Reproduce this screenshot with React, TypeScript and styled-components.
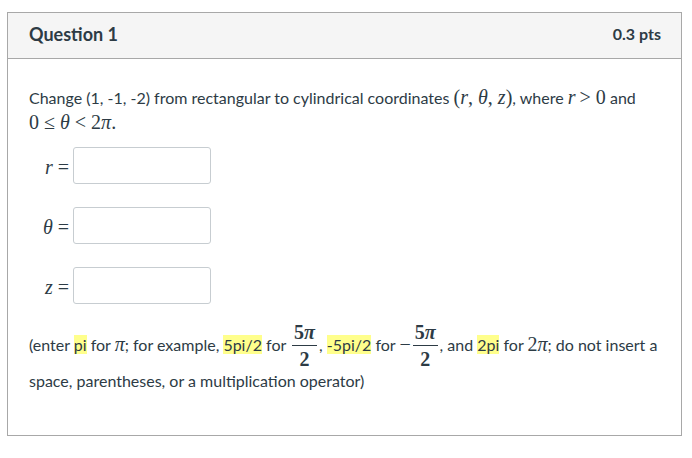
import styled, { createGlobalStyle } from "styled-components";

const GlobalStyle = createGlobalStyle`
  body {
    margin: 0;
    background: #ffffff;
    font-family: Lato, "Liberation Sans", sans-serif;
    color: #2d3b45;
  }
`;

const Page = styled.div`
  padding: 12px 10px 0 7px;
`;

const Card = styled.section`
  width: 675px;
  height: 424px;
  border: 1px solid #a8a8a8;
  box-sizing: border-box;
  display: flex;
  flex-direction: column;
`;

const Header = styled.header`
  height: 45px;
  background: #f5f5f5;
  border-bottom: 1px solid #a8a8a8;
  display: flex;
  align-items: center;
  justify-content: space-between;
  padding: 0 20px 0 21px;
`;

const Title = styled.h2`
  margin: 0 0 3px 0;
  font-size: 18px;
  line-height: 1;
  font-weight: 700;
  color: #2d3b45;
`;

const Points = styled.span`
  margin-bottom: 3px;
  font-size: 16px;
  line-height: 1;
  font-weight: 700;
  color: #2d3b45;
`;

const Body = styled.div`
  padding: 26px 21px 0 21px;
  font-size: 16px;
  line-height: 24px;
`;

const Prompt = styled.p`
  margin: 0;
`;

const M = styled.span<{ $upright?: boolean }>`
  font-family: "Liberation Serif", "DejaVu Serif", serif;
  font-style: ${({ $upright }) => ($upright ? "normal" : "italic")};
  font-size: 20px;
  color: #2d3b45;
`;

const Fields = styled.div`
  display: flex;
  flex-direction: column;
  gap: 23px;
  margin-top: 12px;
`;

const FieldRow = styled.label`
  display: flex;
  align-items: center;
  gap: 4px;
`;

const FieldLabel = styled.span`
  width: 40px;
  text-align: right;
  font-family: "Liberation Serif", "DejaVu Serif", serif;
  font-size: 20px;
  color: #2d3b45;
  padding-top: 2px;
  white-space: nowrap;
`;

const Field = styled.input`
  width: 138px;
  height: 37px;
  box-sizing: border-box;
  border: 1px solid #c7cdd1;
  border-radius: 3px;
  background: #fff;
`;

const Note = styled.p`
  margin: 18px 0 0 0;
  line-height: 24px;
`;

const Mark = styled.span`
  background: #ffff8c;
`;

const Frac = styled.span`
  display: inline-flex;
  flex-direction: column;
  align-items: center;
  vertical-align: 12px;
  font-family: "Liberation Serif", "DejaVu Serif", serif;
  font-size: 20px;
  font-weight: 600;
  line-height: 20px;
  margin: 0 2px;
`;

const Num = styled.span`
  padding: 0 2px 3px;
  border-bottom: 1px solid #2d3b45;
`;

const Den = styled.span`
  padding-top: 3px;
`;

const Fraction = ({ top, bottom }: { top: React.ReactNode; bottom: React.ReactNode }) => (
  <Frac>
    <Num>{top}</Num>
    <Den>{bottom}</Den>
  </Frac>
);

const fields = [
  { id: "r", label: "r" },
  { id: "theta", label: "θ" },
  { id: "z", label: "z" },
];

const App = () => {
  return (
    <Page>
      <GlobalStyle />
      <Card>
        <Header>
          <Title>Question 1</Title>
          <Points>0.3 pts</Points>
        </Header>
        <Body>
          <Prompt>
            Change (1, -1, -2) from rectangular to cylindrical coordinates{" "}
            <M $upright>(</M>
            <M>r</M>
            <M $upright>, </M>
            <M>θ</M>
            <M $upright>, </M>
            <M>z</M>
            <M $upright>)</M>, where <M>r</M> <M $upright>&gt; 0</M> and
            <br />
            <M $upright>0 ≤ </M>
            <M>θ</M>
            <M $upright> &lt; 2</M>
            <M>π</M>
            <M $upright>.</M>
          </Prompt>
          <Fields>
            {fields.map((f) => (
              <FieldRow key={f.id}>
                <FieldLabel>
                  <i>{f.label}</i> =
                </FieldLabel>
                <Field type="text" />
              </FieldRow>
            ))}
          </Fields>
          <Note>
            (enter <Mark>pi</Mark> for <M>π</M>; for example, <Mark>5pi/2</Mark> for{" "}
            <Fraction top={<>5<i>π</i></>} bottom="2" />, <Mark>-5pi/2</Mark> for{" "}
            <M $upright>−</M>
            <Fraction top={<>5<i>π</i></>} bottom="2" />, and <Mark>2pi</Mark> for{" "}
            <M $upright>2</M>
            <M>π</M>; do not insert a
            <br />
            space, parentheses, or a multiplication operator)
          </Note>
        </Body>
      </Card>
    </Page>
  );
};

export default App;
